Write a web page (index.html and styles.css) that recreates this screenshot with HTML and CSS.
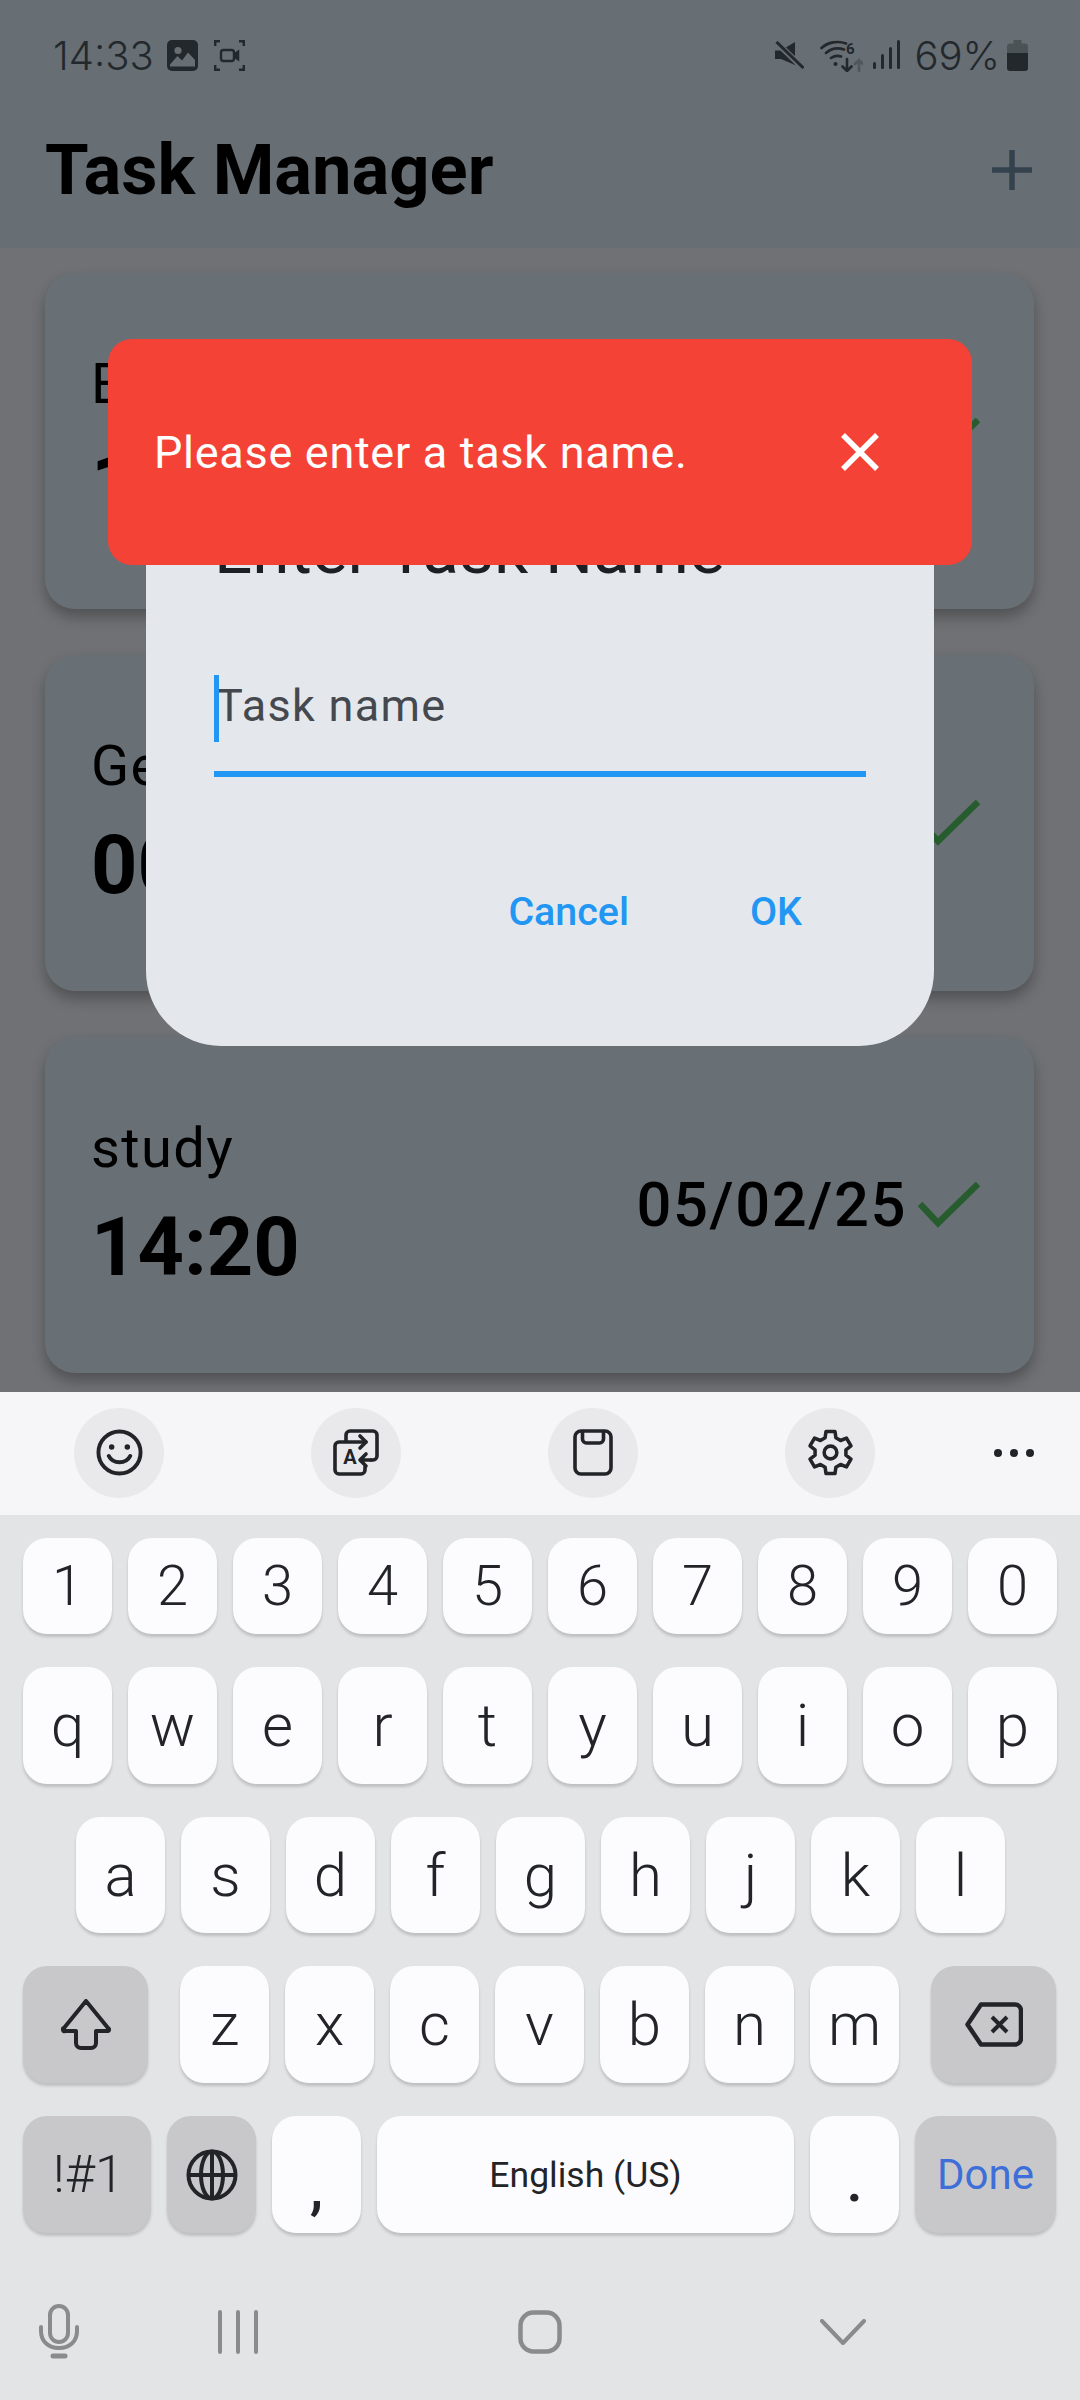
FILE: index.html
```html
<!DOCTYPE html>
<html lang="en">
<head>
    <meta charset="UTF-8">
    <meta name="viewport" content="width=device-width, initial-scale=1.0">
    <title>Task Manager</title>
    <link rel="stylesheet" href="styles.css">
</head>
<body>
    <div class="screen">
        <header class="app-header">
            <div class="status-bar">
                <span class="clock">14:33</span>
                <svg class="st-icon st-image" viewBox="0 0 31 31"><rect width="31" height="31" rx="5" fill="#23282c"/><circle cx="11" cy="10.5" r="3.6" fill="#676e74"/><path d="M3 24.500 10.500 16 15 20.500 21 12.500 28 20V26.500H3Z" fill="#676e74"/></svg>
                <svg class="st-icon st-record" viewBox="0 0 31 31" fill="none" stroke="#23282c" stroke-width="2.400"><path d="M1.200 6V1.200H6M25 1.200H29.800V6M1.200 25V29.800H6M29.800 25V29.800H25"/><rect x="7" y="10" width="13" height="11" rx="2.500"/><path d="M20 14l4.500-3v9l-4.500-3" fill="#23282c" stroke-width="1.500"/></svg>
                <div class="status-right">
                    <svg class="st-mute" viewBox="0 0 29 28"><path d="M0 9.500H6L20 1V24L6 18H0Z" fill="#23282c"/><path d="M1 1 28 27" stroke="#676e74" stroke-width="6"/><path d="M1.500 1 28.500 27" stroke="#23282c" stroke-width="3"/></svg>
                    <svg class="st-wifi" viewBox="0 0 43 33" fill="none" stroke="#23282c" stroke-width="2.600" stroke-linecap="round"><path d="M1.500 9C8 3 18 1.500 26 4.500M6 14C11 9.500 18 8.500 24 10.500M11 19C14 17 18 16.500 21 17.500"/><circle cx="15.500" cy="25" r="2" fill="#23282c" stroke="none"/><text x="26" y="15" class="wifi-six">6</text><path d="M27 20V32M22.500 27.500 27 32 31.500 27.500"/><path d="M39 32V21M35 25 39 21 43 25" stroke="#50575c"/></svg>
                    <svg class="st-signal" viewBox="0 0 28 30" fill="#23282c"><rect x="0" y="22" width="3" height="7" rx="1.500"/><rect x="8" y="14" width="3" height="15" rx="1.500"/><rect x="16" y="7" width="3" height="22" rx="1.500"/><rect x="24" y="0" width="3" height="29" rx="1.500"/></svg>
                    <span class="battery-text">69%</span>
                    <svg class="st-battery" viewBox="0 0 21 31"><path d="M6.500 0h8v3.500H18a3 3 0 0 1 3 3V13H0V6.500a3 3 0 0 1 3-3h3.500Z" fill="#4c5357"/><path d="M0 13H21V28a3 3 0 0 1-3 3H3a3 3 0 0 1-3-3Z" fill="#23282c"/></svg>
                </div>
            </div>
            <div class="title-row">
                <h1>Task Manager</h1>
                <svg class="add-icon" viewBox="0 0 40 40"><path d="M20 0V40M0 20H40" stroke="#33424d" stroke-width="5.500"/></svg>
            </div>
        </header>

        <main class="task-list">
            <div class="card">
                <div class="card-left">
                    <div class="task-name">E</div>
                    <div class="task-time">1</div>
                </div>
                <div class="card-right">
                    <svg class="check" viewBox="0 0 62 46"><path d="M2 22 20 41 60 2" fill="none" stroke="#275c2f" stroke-width="6.500"/></svg>
                </div>
            </div>
            <div class="card">
                <div class="card-left">
                    <div class="task-name">Ge</div>
                    <div class="task-time">00</div>
                </div>
                <div class="card-right">
                    <svg class="check" viewBox="0 0 62 46"><path d="M2 22 20 41 60 2" fill="none" stroke="#275c2f" stroke-width="6.500"/></svg>
                </div>
            </div>
            <div class="card">
                <div class="card-left">
                    <div class="task-name">study</div>
                    <div class="task-time">14:20</div>
                </div>
                <div class="card-right">
                    <span class="task-date">05/02/25</span>
                    <svg class="check" viewBox="0 0 62 46"><path d="M2 22 20 41 60 2" fill="none" stroke="#275c2f" stroke-width="6.500"/></svg>
                </div>
            </div>
        </main>

        <!-- Dialog -->
        <div class="dialog">
            <h2>Enter Task Name</h2>
            <div class="field">
                <span class="caret"></span>
                <span class="placeholder">Task name</span>
            </div>
            <div class="dialog-actions">
                <span class="btn-cancel">Cancel</span>
                <span class="btn-ok">OK</span>
            </div>
        </div>

        <!-- Error message over the dialog -->
        <div class="snackbar">
            <span>Please enter a task name.</span>
            <svg class="snack-close" viewBox="0 0 38 38"><path d="M2 2 36 36M36 2 2 36" stroke="#fff" stroke-width="5.500"/></svg>
        </div>

        <section class="keyboard">
            <div class="kb-toolbar">
                <div class="tool">
                    <svg class="icon-smile" viewBox="0 0 48 48" fill="none" stroke="#232427" stroke-width="4"><circle cx="24" cy="24" r="21.500"/><circle cx="16" cy="18.500" r="2.800" fill="#232427" stroke="none"/><circle cx="32" cy="18.500" r="2.800" fill="#232427" stroke="none"/><path d="M13 27.500C15 31.500 19 34 24 34S33 31.500 35 27.500" stroke-linecap="round"/></svg>
                </div>
                <div class="tool">
                    <svg class="icon-translate" viewBox="0 0 46 47" fill="none" stroke="#232427" stroke-width="3.600" stroke-linecap="round" stroke-linejoin="round"><path d="M13 12V6a4 4 0 0 1 4-4H40a4 4 0 0 1 4 4V27a4 4 0 0 1-4 4H38"/><path d="M33 13H6a4 4 0 0 0-4 4V41a4 4 0 0 0 4 4H28a4 4 0 0 0 4-4V38"/><path d="M27 7l6 6-6 6M38 31H28M33 25l-6 6 6 6"/><text x="17" y="35" class="translate-a">A</text></svg>
                </div>
                <div class="tool">
                    <svg class="icon-clip" viewBox="0 0 40 47" fill="none" stroke="#232427" stroke-width="3.600" stroke-linejoin="round"><rect x="2" y="2" width="36" height="43" rx="6"/><path d="M9.500 2V10a4 4 0 0 0 4 4H26.500a4 4 0 0 0 4-4V2"/></svg>
                </div>
                <div class="tool">
                    <svg class="icon-gear" viewBox="-24 -24 48 48" fill="none" stroke="#232427" stroke-width="3.600" stroke-linejoin="round"><path d="M-5.500-15-4.600-21.500H4.600L5.500-15 10.240-12.260 16.320-14.730 20.920-6.770 15.750-2.740V2.740L20.920 6.770 16.320 14.730 10.240 12.260 5.500 15 4.600 21.500H-4.600L-5.500 15-10.240 12.260-16.320 14.730-20.920 6.770-15.750 2.740V-2.740L-20.920-6.770-16.320-14.730-10.240-12.260Z"/><circle r="6.500"/></svg>
                </div>
                <div class="more-dots"><i></i><i></i><i></i></div>
            </div>

            <div class="kb-keys">
                <div class="key-row row-num">
                    <div class="key">1</div><div class="key">2</div><div class="key">3</div><div class="key">4</div><div class="key">5</div>
                    <div class="key">6</div><div class="key">7</div><div class="key">8</div><div class="key">9</div><div class="key">0</div>
                </div>
                <div class="key-row">
                    <div class="key">q</div><div class="key">w</div><div class="key">e</div><div class="key">r</div><div class="key">t</div>
                    <div class="key">y</div><div class="key">u</div><div class="key">i</div><div class="key">o</div><div class="key">p</div>
                </div>
                <div class="key-row row-home">
                    <div class="key">a</div><div class="key">s</div><div class="key">d</div><div class="key">f</div><div class="key">g</div>
                    <div class="key">h</div><div class="key">j</div><div class="key">k</div><div class="key">l</div>
                </div>
                <div class="key-row">
                    <div class="key key-grey key-shift">
                        <svg class="icon-shift" viewBox="0 0 50 51" fill="none" stroke="#232427" stroke-width="4" stroke-linejoin="round"><path d="M25 2 47 29a1.500 1.500 0 0 1-1 3H35V44a5 5 0 0 1-5 5H20a5 5 0 0 1-5-5V32H4a1.500 1.500 0 0 1-1-3Z"/></svg>
                    </div>
                    <div class="key">z</div><div class="key">x</div><div class="key">c</div><div class="key">v</div><div class="key">b</div><div class="key">n</div><div class="key">m</div>
                    <div class="key key-grey key-back">
                        <svg class="icon-back" viewBox="0 0 58 45" fill="none" stroke="#232427" stroke-width="4.500" stroke-linejoin="round"><path d="M16 2.500H50a6 6 0 0 1 6 6V36.500a6 6 0 0 1-6 6H16L2.500 22.500Z"/><path d="M27 15 42 30M42 15 27 30" stroke-width="4"/></svg>
                    </div>
                </div>
                <div class="key-row">
                    <div class="key key-grey key-sym">!#1</div>
                    <div class="key key-grey">
                        <svg class="icon-globe" viewBox="0 0 52 52" fill="none" stroke="#232427" stroke-width="4"><circle cx="26" cy="26" r="23.500"/><ellipse cx="26" cy="26" rx="11" ry="23.500"/><path d="M26 2.500V49.500M2.500 26H49.500"/></svg>
                    </div>
                    <div class="key key-low key-comma">,</div>
                    <div class="key key-space">English (US)</div>
                    <div class="key key-low">.</div>
                    <div class="key key-grey key-done">Done</div>
                </div>
            </div>

            <nav class="nav-bar">
                <svg class="icon-mic" viewBox="0 0 42 55" fill="none" stroke="#8a8b8d" stroke-width="4" stroke-linecap="round"><rect x="12" y="2" width="18" height="36" rx="9"/><path d="M3 23V27C3 37 10 44 21 44S39 37 39 27V23"/><path d="M15 52H27" stroke-width="5"/></svg>
                <svg class="icon-recents" viewBox="0 0 42 44" stroke="#8a8b8d" stroke-width="4" stroke-linecap="round"><path d="M3 2V42M21 2V42M39 2V42"/></svg>
                <svg class="icon-home" viewBox="0 0 44 44" fill="none" stroke="#8a8b8d" stroke-width="4.500"><rect x="2.500" y="2.500" width="39" height="39" rx="13"/></svg>
                <svg class="icon-down" viewBox="0 0 46 26" fill="none" stroke="#8a8b8d" stroke-width="4" stroke-linecap="round" stroke-linejoin="round"><path d="M2 2 23 24 44 2"/></svg>
            </nav>
        </section>
    </div>
</body>
</html>
```

FILE: styles.css
```css
body {
    margin: 0;
    padding: 0;
    font-family: Roboto, "Liberation Sans", sans-serif;
    background-color: #707174;
    color: #000;
}
.screen {
    position: relative;
    width: 1080px;
    height: 2400px;
    overflow: hidden;
    display: flex;
    flex-direction: column;
}

/* status bar + app bar */
.app-header {
    height: 248px;
    background-color: #676e74;
    flex-shrink: 0;
}
.status-bar {
    height: 110px;
    display: flex;
    align-items: center;
    padding: 0 52px 0 53px;
    color: #23282c;
    font-family: Inter, Roboto, sans-serif;
    font-size: 40px;
    font-weight: 300;
}
.clock {
    width: 114px;
}
.st-icon {
    width: 31px;
    height: 31px;
}
.st-record {
    margin-left: 16px;
}
.status-right {
    margin-left: auto;
    display: flex;
    align-items: center;
}
.st-mute {
    width: 29px;
    height: 28px;
}
.st-wifi {
    width: 43px;
    height: 33px;
    margin-left: 16px;
}
.wifi-six {
    font-family: Roboto, sans-serif;
    font-size: 15px;
    font-weight: 700;
    fill: #23282c;
    stroke: none;
}
.st-signal {
    width: 28px;
    height: 30px;
    margin-left: 10px;
}
.battery-text {
    margin-left: 13px;
}
.st-battery {
    width: 21px;
    height: 31px;
    margin-left: 7px;
}
.title-row {
    display: flex;
    align-items: center;
    justify-content: space-between;
    padding: 0 48px 0 45px;
    height: 120px;
}
h1 {
    margin: 0;
    font-size: 70.500px;
    font-weight: 700;
    line-height: 1;
}
.add-icon {
    width: 40px;
    height: 40px;
}

/* task cards */
.task-list {
    flex: 1;
    display: flex;
    flex-direction: column;
    gap: 46px;
    padding: 25px 46px 0 45px;
}
.card {
    height: 336px;
    flex-shrink: 0;
    background-color: #686f75;
    border-radius: 30px;
    box-shadow: 0 8px 14px rgba(0, 0, 0, 0.28);
    display: flex;
    align-items: center;
    justify-content: space-between;
    padding: 0 54px 0 46px;
}
.card-left {
    display: flex;
    flex-direction: column;
    margin-top: 6px;
}
.task-name {
    font-size: 56px;
    letter-spacing: 1.400px;
    line-height: 66px;
    margin-bottom: 20px;
}
.task-time {
    font-size: 81px;
    font-weight: 700;
    line-height: 94px;
}
.card-left {
    margin-top: 0;
}
.card-right {
    display: flex;
    align-items: center;
    gap: 11px;
}
.task-date {
    font-size: 61.500px;
    font-weight: 500;
    letter-spacing: 1.600px;
}
.check {
    width: 62px;
    height: 46px;
}

/* dialog */
.dialog {
    position: absolute;
    left: 146px;
    top: 400px;
    width: 788px;
    height: 646px;
    box-sizing: border-box;
    background-color: #e4e8ed;
    border-radius: 75px;
    padding: 110px 68px 0 68px;
    display: flex;
    flex-direction: column;
}
h2 {
    margin: 0;
    font-size: 67.500px;
    font-weight: 400;
    line-height: 80px;
    color: #1c1f23;
}
.field {
    position: relative;
    height: 132px;
    margin-top: 49px;
    padding-left: 2px;
    display: flex;
    align-items: center;
    border-bottom: 6px solid #2196f3;
}
.caret {
    position: absolute;
    left: 0;
    top: 36px;
    width: 5px;
    height: 67px;
    background-color: #2196f3;
}
.placeholder {
    font-size: 45px;
    letter-spacing: 1.300px;
    color: #45484e;
}
.dialog-actions {
    display: flex;
    justify-content: flex-end;
    gap: 121px;
    padding-right: 64px;
    margin-top: 111px;
    font-size: 39.400px;
    font-weight: 500;
    color: #2196f3;
}

/* snackbar */
.snackbar {
    position: absolute;
    left: 108px;
    top: 339px;
    width: 864px;
    height: 226px;
    box-sizing: border-box;
    background-color: #f44336;
    border-radius: 24px;
    padding: 0 93px 0 46px;
    display: flex;
    align-items: center;
    justify-content: space-between;
    color: #fff;
    font-size: 45px;
    letter-spacing: 0.700px;
}
.snack-close {
    width: 38px;
    height: 38px;
}

/* keyboard */
.keyboard {
    height: 1008px;
    flex-shrink: 0;
    background-color: #e3e4e6;
    display: flex;
    flex-direction: column;
}
.kb-toolbar {
    height: 123px;
    box-sizing: border-box;
    padding: 0 0 2px 74px;
    background-color: #f6f6f8;
    display: flex;
    align-items: center;
    gap: 147px;
}
.tool {
    width: 90px;
    height: 90px;
    border-radius: 50%;
    background-color: #e9e9eb;
    display: flex;
    align-items: center;
    justify-content: center;
}
.icon-smile { width: 47px; height: 47px; }
.icon-translate { width: 46px; height: 47px; }
.icon-clip { width: 40px; height: 47px; }
.icon-gear { width: 47px; height: 47px; }
.more-dots {
    display: flex;
    gap: 8px;
    margin-left: -28px;
}
.more-dots i {
    width: 8px;
    height: 8px;
    border-radius: 50%;
    background-color: #232427;
}
.kb-keys {
    display: flex;
    flex-direction: column;
    gap: 33px;
    padding: 23px 23px 0 23px;
}
.key-row {
    height: 117px;
    display: flex;
    gap: 16px;
}
.row-num {
    height: 96px;
}
.row-home {
    height: 116px;
    padding: 0 53px;
}
.key {
    width: 89px;
    flex-shrink: 0;
    background-color: #fcfcfe;
    border-radius: 24px;
    box-shadow: 0 3px 3px rgba(0, 0, 0, 0.16);
    display: flex;
    align-items: center;
    justify-content: center;
    font-size: 60px;
    font-weight: 350;
    color: #232427;
}
.row-num .key {
    font-size: 56px;
}
.key-grey {
    background-color: #c8c8ca;
}
.key-shift {
    width: 125px;
    margin-right: 16px;
}
.key-back {
    width: 125px;
    margin-left: 16px;
}
.key-sym {
    width: 128px;
    font-size: 52px;
    padding-left: 3px;
    box-sizing: border-box;
}
.key-low {
    align-items: flex-end;
    padding-bottom: 22px;
    box-sizing: border-box;
    line-height: 1;
    font-weight: 500;
}
.key-comma {
    padding-bottom: 15px;
}
.key-space {
    width: 417px;
    font-size: 35.500px;
    font-weight: 400;
}
.key-done {
    width: 141px;
    font-size: 42px;
    font-weight: 400;
    color: #3e6fd8;
}
.icon-shift { width: 50px; height: 51px; }
.icon-back { width: 58px; height: 45px; }
.icon-globe { width: 52px; height: 52px; }

/* bottom nav */
.nav-bar {
    flex: 1;
    display: grid;
    grid-template-columns: 118px 240px 364px 242px;
    justify-items: center;
    align-items: center;
    padding-top: 30px;
}
.icon-mic { width: 42px; height: 55px; }
.icon-recents { width: 42px; height: 44px; }
.icon-home { width: 44px; height: 44px; }
.icon-down { width: 46px; height: 26px; }
.translate-a {
    font-family: Roboto, sans-serif;
    font-size: 20px;
    font-weight: 700;
    fill: #232427;
    stroke: none;
    text-anchor: middle;
}
```
